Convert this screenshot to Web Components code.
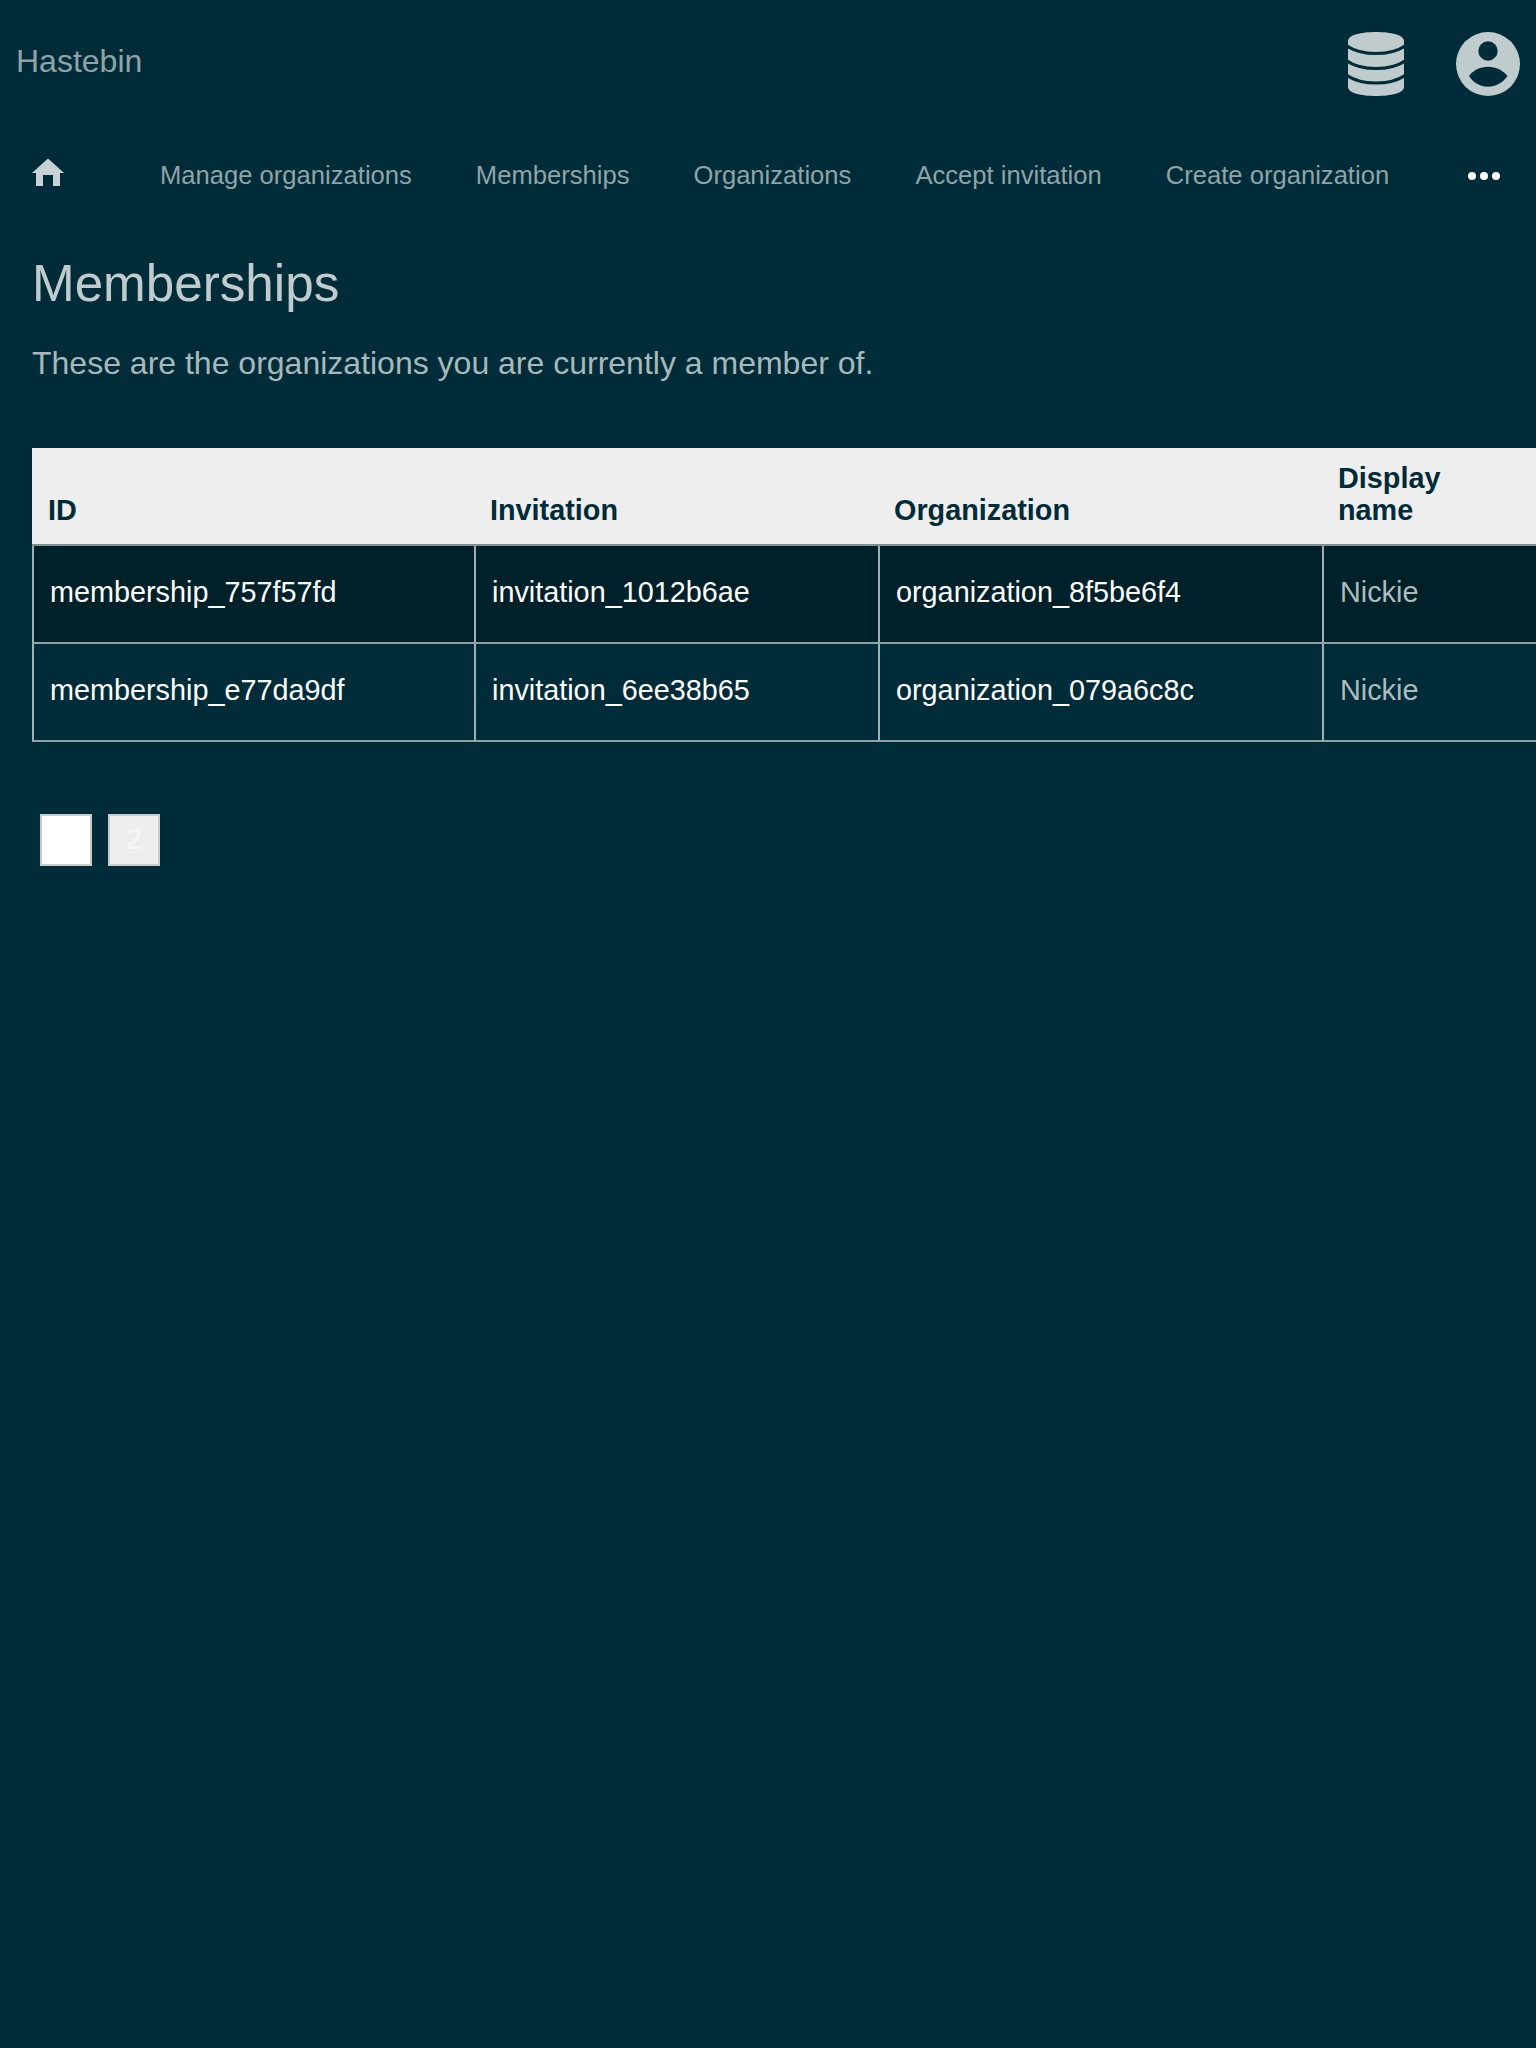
<!DOCTYPE html>
<html>
<head>
<meta charset="utf-8">
<title>Memberships</title>
<style>
  html, body { margin: 0; background: #002b38; }
  body { font-family: "Liberation Sans", Arial, sans-serif; overflow-x: hidden; min-height: 2048px; }
</style>
</head>
<body>
<app-header>Hastebin</app-header>
<app-nav>
  <nav-link>Manage organizations</nav-link>
  <nav-link>Memberships</nav-link>
  <nav-link>Organizations</nav-link>
  <nav-link>Accept invitation</nav-link>
  <nav-link>Create organization</nav-link>
</app-nav>
<page-intro heading="Memberships">These are the organizations you are currently a member of.</page-intro>
<data-table></data-table>
<page-buttons></page-buttons>

<template id="header-template">
  <style>
    :host { display: flex; align-items: center; justify-content: space-between; height: 122px; padding: 0 16px; }
    .title { font-size: 32px; color: #90a4a8; }
    .icons { display: flex; align-items: center; gap: 52px; padding-top: 6px; }
    svg { display: block; }
  </style>
  <div class="title"><slot></slot></div>
  <div class="icons">
    <svg width="56" height="64" viewBox="0 0 56 64">
      <path d="M0 9C0 3 13 0 28 0S56 3 56 9V55C56 61 43 64 28 64S0 61 0 55Z" fill="#c0cbce"/>
      <g fill="none" stroke="#002b38" stroke-width="3">
        <path d="M-1 14C6 19 17 21.500 28 21.500S50 19 57 14"/>
        <path d="M-1 29C6 34 17 36.500 28 36.500S50 34 57 29"/>
        <path d="M-1 43.500C6 48.500 17 51 28 51S50 48.500 57 43.500"/>
      </g>
    </svg>
    <svg width="64" height="64" viewBox="0 0 64 64">
      <circle cx="32" cy="32" r="32" fill="#c0cbce"/>
      <circle cx="32" cy="19" r="9.700" fill="#002b38"/>
      <path d="M13 44C17 38.500 24 34.700 32 34.700C40 34.700 47 38.500 51.500 44C47 50.500 40 54.700 32 54.700C24 54.700 17 50.500 13 44Z" fill="#002b38"/>
    </svg>
  </div>
</template>

<template id="nav-template">
  <style>
    :host { display: flex; align-items: center; height: 58px; margin-top: 24px; padding: 0 16px 0 32px; }
    .home { width: 32px; height: 30px; margin-right: 96px; margin-top: -4px; }
    .links { display: flex; gap: 64px; flex: 1; }
    .more { display: flex; gap: 4px; margin: 2px 20px 0 0; }
    .more i { width: 8px; height: 8px; border-radius: 50%; background: #fff; }
    svg { display: block; }
  </style>
  <svg class="home" viewBox="0 0 32 30" fill="#c8d1d5">
    <path d="M16 0.500L32 15H28V28H21V17H11V28H4V15H0Z"/>
  </svg>
  <div class="links"><slot></slot></div>
  <div class="more"><i></i><i></i><i></i></div>
</template>

<template id="intro-template">
  <style>
    :host { display: block; padding: 0 32px; }
    h1 { margin: 0; padding-top: 50px; font-size: 51.2px; line-height: 59px; font-weight: 400; color: #c0cbce; }
    p { margin: 0; padding-top: 32px; font-size: 32px; line-height: 37px; color: #a8b8bb; }
  </style>
  <h1></h1>
  <p><slot></slot></p>
</template>

<template id="table-template">
  <style>
    :host { display: block; margin: 66px 0 0 32px; overflow: hidden; }
    table { border-collapse: separate; border-spacing: 0; table-layout: fixed; width: 1504px; font-size: 28.8px; }
    th {
      background: #eee; color: #002b38; font-weight: 700; line-height: 32px;
      text-align: left; vertical-align: bottom; padding: 13px 16px 18px; height: 98px; box-sizing: border-box;
      border-bottom: 2px solid #7f8f94;
    }
    td {
      height: 98px; box-sizing: border-box; padding: 0 16px 4px; color: #fff; line-height: 32px; vertical-align: middle;
      border-left: 2px solid #9fb0b4; border-bottom: 2px solid #8fa1a6;
    }
    tbody tr:nth-child(odd) td { background: #00202a; }
    td.name { color: #aebcbf; }
  </style>
  <table>
    <colgroup><col style="width:442px"><col style="width:404px"><col style="width:444px"><col></colgroup>
    <thead><tr><th>ID</th><th>Invitation</th><th>Organization</th><th>Display<br>name</th></tr></thead>
    <tbody></tbody>
  </table>
</template>

<template id="buttons-template">
  <style>
    :host { display: flex; gap: 16px; margin: 72px 0 0 40px; }
    span {
      width: 52px; height: 52px; box-sizing: border-box; border: 2px solid #c8cccc; background: #eee;
      color: #f7f7f7; font-size: 28.8px; padding-bottom: 2px; display: flex; align-items: center; justify-content: center;
    }
    span.on { background: #fff; color: #fff; }
  </style>
  <span class="on">1</span><span>2</span>
</template>

<script>
  function mount(el, id) {
    el.attachShadow({ mode: "open" });
    el.shadowRoot.appendChild(document.getElementById(id).content.cloneNode(true));
    return el.shadowRoot;
  }

  customElements.define("app-header", class extends HTMLElement {
    connectedCallback() { mount(this, "header-template"); }
  });

  customElements.define("app-nav", class extends HTMLElement {
    connectedCallback() { mount(this, "nav-template"); }
  });

  customElements.define("nav-link", class extends HTMLElement {
    connectedCallback() {
      this.attachShadow({ mode: "open" }).innerHTML =
        '<style>:host { display: block; font-size: 25.6px; color: #90a4a8; }</style><slot></slot>';
    }
  });

  customElements.define("page-intro", class extends HTMLElement {
    connectedCallback() {
      const root = mount(this, "intro-template");
      root.querySelector("h1").textContent = this.getAttribute("heading");
    }
  });

  const memberships = [
    ["membership_757f57fd", "invitation_1012b6ae", "organization_8f5be6f4", "Nickie"],
    ["membership_e77da9df", "invitation_6ee38b65", "organization_079a6c8c", "Nickie"]
  ];

  customElements.define("data-table", class extends HTMLElement {
    connectedCallback() {
      const root = mount(this, "table-template");
      const body = root.querySelector("tbody");
      memberships.forEach((row) => {
        const tr = document.createElement("tr");
        row.forEach((text, i) => {
          const td = document.createElement("td");
          td.textContent = text;
          if (i === 3) td.className = "name";
          tr.appendChild(td);
        });
        body.appendChild(tr);
      });
    }
  });

  customElements.define("page-buttons", class extends HTMLElement {
    connectedCallback() { mount(this, "buttons-template"); }
  });
</script>
</body>
</html>
